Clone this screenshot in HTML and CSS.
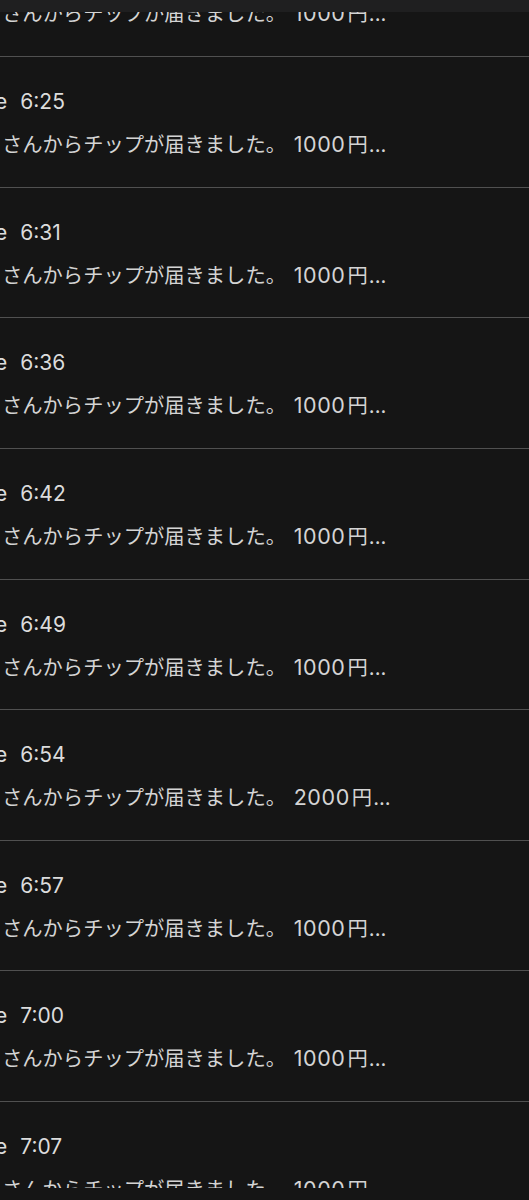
FILE: index.html
```html
<!DOCTYPE html>
<html lang="ja">
<head>
<meta charset="utf-8">
<title>通知</title>
<link rel="stylesheet" href="styles.css">
</head>
<body>
<header class="topbar"></header>
<ul class="feed">
  <li class="item"><div class="meta"><span class="name">e</span><span class="time">6:19</span></div><div class="msg">さんからチップが届きました。 <span class="amount">1000</span><span class="unit">円</span>...</div></li>
  <li class="item"><div class="meta"><span class="name">e</span><span class="time">6:25</span></div><div class="msg">さんからチップが届きました。 <span class="amount">1000</span><span class="unit">円</span>...</div></li>
  <li class="item"><div class="meta"><span class="name">e</span><span class="time">6:31</span></div><div class="msg">さんからチップが届きました。 <span class="amount">1000</span><span class="unit">円</span>...</div></li>
  <li class="item"><div class="meta"><span class="name">e</span><span class="time">6:36</span></div><div class="msg">さんからチップが届きました。 <span class="amount">1000</span><span class="unit">円</span>...</div></li>
  <li class="item"><div class="meta"><span class="name">e</span><span class="time">6:42</span></div><div class="msg">さんからチップが届きました。 <span class="amount">1000</span><span class="unit">円</span>...</div></li>
  <li class="item"><div class="meta"><span class="name">e</span><span class="time">6:49</span></div><div class="msg">さんからチップが届きました。 <span class="amount">1000</span><span class="unit">円</span>...</div></li>
  <li class="item"><div class="meta"><span class="name">e</span><span class="time">6:54</span></div><div class="msg">さんからチップが届きました。 <span class="amount">2000</span><span class="unit">円</span>...</div></li>
  <li class="item"><div class="meta"><span class="name">e</span><span class="time">6:57</span></div><div class="msg">さんからチップが届きました。 <span class="amount">1000</span><span class="unit">円</span>...</div></li>
  <li class="item"><div class="meta"><span class="name">e</span><span class="time">7:00</span></div><div class="msg">さんからチップが届きました。 <span class="amount">1000</span><span class="unit">円</span>...</div></li>
  <li class="item"><div class="meta"><span class="name">e</span><span class="time">7:07</span></div><div class="msg">さんからチップが届きました。 <span class="amount">1000</span><span class="unit">円</span>...</div></li>
</ul>
<footer class="bottombar"></footer>
</body>
</html>
```
FILE: styles.css
```css
html, body {
  margin: 0;
  padding: 0;
  background: #151515;
  overflow: hidden;
}

body {
  font-family: "Inter", "Noto Sans CJK JP", sans-serif;
  color: #d6d6d6;
}

.topbar {
  position: fixed;
  top: 0;
  left: 0;
  right: 0;
  height: 12px;
  background: #1f1f20;
  z-index: 2;
}

/* toolbar edge at the bottom of the screen */
.bottombar {
  position: fixed;
  bottom: 0;
  left: 0;
  right: 0;
  height: 12px;
  background: #151515;
  z-index: 2;
}

.feed {
  list-style: none;
  margin: -73.625px 0 0 0;
  padding: 0;
}

.item {
  box-sizing: border-box;
  height: 130.625px;
  border-bottom: 1px solid #505050;
  padding-top: 32px;
  display: flex;
  flex-direction: column;
  gap: 16px;
  overflow: hidden;
}

.meta {
  display: flex;
  align-items: baseline;
  gap: 13px;
  font-size: 21px;
  font-weight: 400;
  line-height: 26px;
  color: #dcdcdc;
  white-space: nowrap;
}

.name {
  margin-left: -5px;
}

.msg {
  padding-left: 2px;
  font-size: 20.3px;
  line-height: 26px;
  color: #d4d4d4;
  white-space: nowrap;
}

.amount {
  margin-left: 2px;
  font-size: 21.5px;
  letter-spacing: 0.6px;
}

.unit {
  margin-left: 2px;
  margin-right: 1px;
}
```
